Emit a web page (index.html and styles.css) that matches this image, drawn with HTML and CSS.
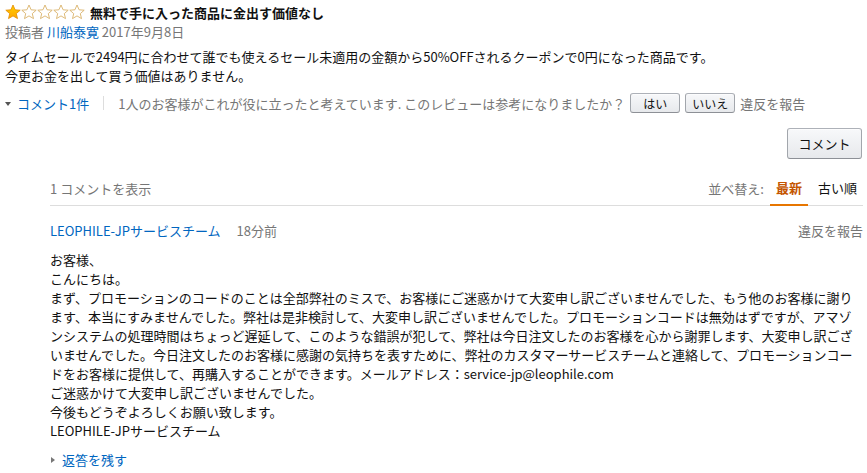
FILE: index.html
```html
<!DOCTYPE html>
<html lang="ja">
<head>
<meta charset="utf-8">
<link rel="stylesheet" href="styles.css">
</head>
<body>
<div class="review">
  <div class="title-row">
    <span class="stars">
      <svg width="80" height="16" viewBox="0 0 80 16">
        <defs>
          <linearGradient id="g" x1="0" y1="0" x2="0" y2="1">
            <stop offset="0" stop-color="#ffce00"/>
            <stop offset="1" stop-color="#ffa700"/>
          </linearGradient>
        </defs>
        <polygon points="8,1 10.1,5.8 15.2,6.2 11.3,9.6 12.5,14.6 8,11.9 3.5,14.6 4.7,9.6 0.8,6.2 5.9,5.8" fill="url(#g)" stroke="#e28a00" stroke-width="0.8"/>
        <polygon transform="translate(16,0)" points="8,1 10.1,5.8 15.2,6.2 11.3,9.6 12.5,14.6 8,11.9 3.5,14.6 4.7,9.6 0.8,6.2 5.9,5.8" fill="#fff" stroke="#d9b26a" stroke-width="0.9"/>
        <polygon transform="translate(32,0)" points="8,1 10.1,5.8 15.2,6.2 11.3,9.6 12.5,14.6 8,11.9 3.5,14.6 4.7,9.6 0.8,6.2 5.9,5.8" fill="#fff" stroke="#d9b26a" stroke-width="0.9"/>
        <polygon transform="translate(48,0)" points="8,1 10.1,5.8 15.2,6.2 11.3,9.6 12.5,14.6 8,11.9 3.5,14.6 4.7,9.6 0.8,6.2 5.9,5.8" fill="#fff" stroke="#d9b26a" stroke-width="0.9"/>
        <polygon transform="translate(64,0)" points="8,1 10.1,5.8 15.2,6.2 11.3,9.6 12.5,14.6 8,11.9 3.5,14.6 4.7,9.6 0.8,6.2 5.9,5.8" fill="#fff" stroke="#d9b26a" stroke-width="0.9"/>
      </svg>
    </span>
    <span class="title">無料で手に入った商品に金出す価値なし</span>
  </div>
  <div class="meta">投稿者 <span class="link">川船泰寛</span> 2017年9月8日</div>
  <div class="review-body">タイムセールで2494円に合わせて誰でも使えるセール未適用の金額から50%OFFされるクーポンで0円になった商品です。<br>今更お金を出して買う価値はありません。</div>
  <div class="actions">
    <span class="caret-down"></span>
    <span class="link">コメント1件</span>
    <span class="sep"></span>
    <span class="muted">1人のお客様がこれが役に立ったと考えています. このレビューは参考になりましたか？</span>
    <span class="btn small">はい</span>
    <span class="btn small">いいえ</span>
    <span class="muted">違反を報告</span>
  </div>
</div>

<div class="comments">
  <div class="comment-btn-row">
    <span class="btn big">コメント</span>
  </div>
  <div class="comments-head">
    <span class="muted">1 コメントを表示</span>
    <div class="sort">
      <span class="muted sort-label">並べ替え:</span>
      <span class="tab active">最新</span>
      <span class="tab">古い順</span>
    </div>
  </div>
  <div class="comment">
    <div class="comment-head">
      <div><span class="link">LEOPHILE-JPサービスチーム</span><span class="muted time">18分前</span></div>
      <span class="muted">違反を報告</span>
    </div>
    <div class="comment-body">お客様、<br>こんにちは。<br>まず、プロモーションのコードのことは全部弊社のミスで、お客様にご迷惑かけて大変申し訳ございませんでした、もう他のお客様に謝ります、本当にすみませんでした。弊社は是非検討して、大変申し訳ございませんでした。プロモーションコードは無効はずですが、アマゾンシステムの処理時間はちょっど遅延して、このような錯誤が犯して、弊社は今日注文したのお客様を心から謝罪します、大変申し訳ございませんでした。今日注文したのお客様に感謝の気持ちを表すために、弊社のカスタマーサービスチームと連絡して、プロモーションコードをお客様に提供して、再購入することができます。メールアドレス：service-jp@leophile.com<br>ご迷惑かけて大変申し訳ございませんでした。<br>今後もどうぞよろしくお願い致します。<br>LEOPHILE-JPサービスチーム</div>
    <div class="reply"><span class="caret-right"></span><span class="link">返答を残す</span></div>
  </div>
</div>
</body>
</html>
```

FILE: styles.css
```css
* { box-sizing: border-box; }
body {
  margin: 0;
  font-family: "Noto Sans CJK JP", "Noto Sans", sans-serif;
  font-size: 13px;
  color: #111;
  background: #fff;
  width: 867px;
  height: 473px;
  overflow: hidden;
}
.link { color: #0066c0; }
.muted { color: #767676; }

.review { padding: 2px 0 0 5px; }
.title-row { display: flex; align-items: center; height: 20px; }
.stars { display: flex; width: 85px; }
.stars svg { display: block; }
.title { font-weight: bold; color: #111; }
.meta { color: #767676; line-height: 19px; height: 19px; margin-top: 0; }
.review-body { line-height: 19px; margin-top: 6px; }
.actions {
  display: flex;
  align-items: center;
  height: 22px;
  margin-top: 7px;
}
.caret-down {
  width: 0; height: 0;
  border-left: 3px solid transparent;
  border-right: 3px solid transparent;
  border-top: 4px solid #555;
  margin: 1px 6px 0 0;
}
.sep {
  width: 1px; height: 14px;
  background: #ddd;
  margin: 0 14px 0 14px;
}
.btn {
  display: inline-flex;
  align-items: center;
  justify-content: center;
  border: 1px solid #adb1b8;
  border-color: #adb1b8 #a2a6ac #8d9096;
  border-radius: 3px;
  background: linear-gradient(#f7f8fa, #e7e9ec);
  color: #111;
  box-shadow: inset 0 1px 0 rgba(255,255,255,.6);
}
.btn.small { width: 50px; height: 20px; font-size: 12px; margin-left: 5px; }
.actions .btn.small:first-of-type { margin-left: 9px; }
.actions .btn.small + .muted { margin-left: 5px; }

.comments { margin-left: 50px; width: 813px; }
.comment-btn-row { display: flex; justify-content: flex-end; margin-top: 14px; }
.btn.big { width: 75px; height: 31px; font-size: 13px; margin-right: 1px; }
.comments-head {
  display: flex;
  justify-content: space-between;
  align-items: flex-end;
  border-bottom: 1px solid #ddd;
  height: 47px;
}
.comments-head > .muted { padding-bottom: 7px; }
.sort { display: flex; align-items: flex-end; }
.sort-label { padding-bottom: 7px; margin-right: 6px; }
.tab { padding: 0 6px 7px; border-bottom: 2px solid transparent; margin-bottom: -1px; }
.tab.active { color: #c45500; font-weight: bold; border-bottom-color: #e77600; margin-right: 4px; }
.comment-head {
  display: flex;
  justify-content: space-between;
  margin-top: 15px;
  line-height: 19px;
}
.time { margin-left: 16px; }
.comment-body { margin-top: 10px; line-height: 19px; width: 813px; }
.reply { display: flex; align-items: center; margin-top: 10px; line-height: 19px; }
.caret-right {
  width: 0; height: 0;
  border-top: 3px solid transparent;
  border-bottom: 3px solid transparent;
  border-left: 4px solid #777;
  margin: 1px 7px 0 1px;
}
```
